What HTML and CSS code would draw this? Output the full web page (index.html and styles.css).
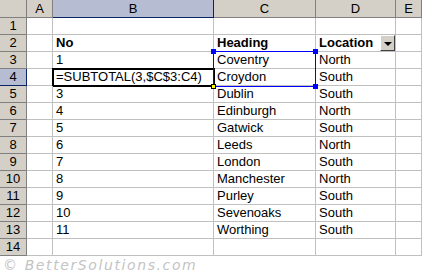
FILE: index.html
```html
<!DOCTYPE html>
<html lang="en">
<head>
  <meta charset="UTF-8">
  <title>Subtotal</title>
  <link rel="stylesheet" href="styles.css">
</head>
<body>
  <div class="sheet">
    <div class="grid">
      <div class="hd corner"></div>
      <div class="hd">A</div>
      <div class="hd sel">B</div>
      <div class="hd">C</div>
      <div class="hd">D</div>
      <div class="hd">E</div>

      <div class="rh">1</div><div class="c"></div><div class="c"></div><div class="c"></div><div class="c"></div><div class="c"></div>

      <div class="rh">2</div><div class="c"></div><div class="c b">No</div><div class="c b">Heading</div>
      <div class="c b drop">Location<span class="btn"><i></i></span></div><div class="c"></div>

      <div class="rh">3</div><div class="c"></div><div class="c">1</div><div class="c">Coventry</div><div class="c">North</div><div class="c"></div>
      <div class="rh sel">4</div><div class="c"></div><div class="c active">=SUBTOTAL(3,$C$3:C4)</div><div class="c">Croydon</div><div class="c">South</div><div class="c"></div>
      <div class="rh">5</div><div class="c"></div><div class="c">3</div><div class="c">Dublin</div><div class="c">South</div><div class="c"></div>
      <div class="rh">6</div><div class="c"></div><div class="c">4</div><div class="c">Edinburgh</div><div class="c">North</div><div class="c"></div>
      <div class="rh">7</div><div class="c"></div><div class="c">5</div><div class="c">Gatwick</div><div class="c">South</div><div class="c"></div>
      <div class="rh">8</div><div class="c"></div><div class="c">6</div><div class="c">Leeds</div><div class="c">North</div><div class="c"></div>
      <div class="rh">9</div><div class="c"></div><div class="c">7</div><div class="c">London</div><div class="c">South</div><div class="c"></div>
      <div class="rh">10</div><div class="c"></div><div class="c">8</div><div class="c">Manchester</div><div class="c">North</div><div class="c"></div>
      <div class="rh">11</div><div class="c"></div><div class="c">9</div><div class="c">Purley</div><div class="c">South</div><div class="c"></div>
      <div class="rh">12</div><div class="c"></div><div class="c">10</div><div class="c">Sevenoaks</div><div class="c">South</div><div class="c"></div>
      <div class="rh">13</div><div class="c"></div><div class="c">11</div><div class="c">Worthing</div><div class="c">South</div><div class="c"></div>
      <div class="rh">14</div><div class="c"></div><div class="c"></div><div class="c"></div><div class="c"></div><div class="c"></div>
    </div>

    <!-- range being referenced by the formula: C3:C4 -->
    <div class="range">
      <span class="h tl"></span><span class="h tr"></span>
      <span class="h bl"></span><span class="h br"></span>
    </div>
  </div>
  <p class="credit">© BetterSolutions.com</p>
</body>
</html>
```

FILE: styles.css
```css
body { margin: 0; background: #fff; font-family: "Liberation Sans", Arial, sans-serif; font-size: 13px; color: #000; }
.sheet { position: relative; }
.grid { display: grid; grid-template-columns: 27px 26px 161px 102px 80px 1fr; grid-template-rows: 18px; grid-auto-rows: 17px; }
.grid > div { box-sizing: border-box; border-right: 1px solid #c0c0c0; border-bottom: 1px solid #c0c0c0; line-height: 16px; white-space: nowrap; overflow: hidden; }
.grid > .hd, .grid > .rh { background: #d4d0c8; border-color: #808080; text-align: center; }
.grid > .hd { line-height: 17px; }
.grid > .sel { background: #b6bdd2; border-color: #0a246a; }
.c { padding-left: 3px; }
.b { font-weight: bold; }
.drop { display: flex; justify-content: space-between; padding-right: 0; }
.btn { box-sizing: border-box; width: 15px; height: 16px; background: #d4d0c8; border: 1px solid; border-color: #fff #404040 #404040 #fff; display: flex; align-items: center; justify-content: center; }
.btn i { width: 0; height: 0; border-left: 4px solid transparent; border-right: 4px solid transparent; border-top: 4px solid #000; margin-top: 1px; }
.grid > .active { outline: 2px solid #000; outline-offset: -1px; overflow: visible; }
.range { position: absolute; left: 213px; top: 51px; width: 103px; height: 36px; box-sizing: border-box; border: 1px solid #0000ff; }
.h { position: absolute; width: 5px; height: 5px; background: #0000ff; }
.tl { left: -3px; top: -3px; }
.tr { right: -3px; top: -3px; }
.bl { left: -3px; bottom: -3px; background: #ffff00; border: 1px solid #000; width: 3px; height: 3px; }
.br { right: -3px; bottom: -3px; }
.credit { margin: 1px 0 0 3px; font-family: "DejaVu Sans", sans-serif; font-style: italic; font-size: 14px; letter-spacing: 1.6px; color: #c4c4c4; }
```
